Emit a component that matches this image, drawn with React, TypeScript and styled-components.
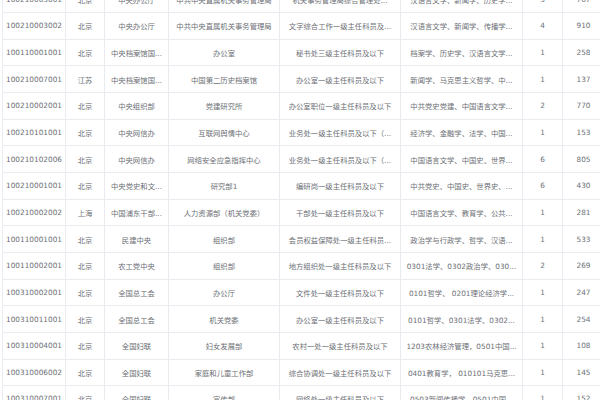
import styled, { createGlobalStyle } from "styled-components";

type Post = {
  code: string;
  area: string;
  dept: string;
  unit: string;
  post: string;
  major: string;
  count: string;
  applicants: string;
};

const posts: Array<Post> = [
  { code: "100210003001", area: "北京", dept: "中央办公厅", unit: "中共中央直属机关事务管理局", post: "机关事务管理局综合管理处...", major: "汉语言文学、新闻学、历史学...", count: "3", applicants: "767" },
  { code: "100210003002", area: "北京", dept: "中央办公厅", unit: "中共中央直属机关事务管理局", post: "文字综合工作一级主任科员及...", major: "汉语言文学、新闻学、传播学...", count: "4", applicants: "910" },
  { code: "100110001001", area: "北京", dept: "中央档案馆国...", unit: "办公室", post: "秘书处三级主任科员及以下", major: "档案学、历史学、汉语言文学...", count: "1", applicants: "258" },
  { code: "100210007001", area: "江苏", dept: "中央档案馆国...", unit: "中国第二历史档案馆", post: "办公室一级主任科员及以下", major: "新闻学、马克思主义哲学、中...", count: "1", applicants: "137" },
  { code: "100210002001", area: "北京", dept: "中央组织部", unit: "党建研究所", post: "办公室职位一级主任科员及以下", major: "中共党史党建、中国语言文学...", count: "2", applicants: "770" },
  { code: "100210101001", area: "北京", dept: "中央网信办", unit: "互联网舆情中心", post: "业务处一级主任科员及以下（...", major: "经济学、金融学、法学、中国...", count: "1", applicants: "153" },
  { code: "100210102006", area: "北京", dept: "中央网信办", unit: "网络安全应急指挥中心", post: "业务处一级主任科员及以下（...", major: "中国语言文学、中国史、世界...", count: "6", applicants: "805" },
  { code: "100210001001", area: "北京", dept: "中央党史和文...", unit: "研究部1", post: "编研岗一级主任科员及以下", major: "中共党史、中国史、世界史、...", count: "6", applicants: "430" },
  { code: "100210002002", area: "上海", dept: "中国浦东干部...", unit: "人力资源部（机关党委）", post: "干部处一级主任科员及以下", major: "中国语言文学、教育学、公共...", count: "1", applicants: "281" },
  { code: "100110001001", area: "北京", dept: "民建中央", unit: "组织部", post: "会员权益保障处一级主任科员...", major: "政治学与行政学、哲学、汉语...", count: "1", applicants: "533" },
  { code: "100110002001", area: "北京", dept: "农工党中央", unit: "组织部", post: "地方组织处一级主任科员及以下", major: "0301法学、0302政治学、030...", count: "2", applicants: "269" },
  { code: "100310002001", area: "北京", dept: "全国总工会", unit: "办公厅", post: "文件处一级主任科员及以下", major: "0101哲学、 0201理论经济学...", count: "1", applicants: "247" },
  { code: "100310011001", area: "北京", dept: "全国总工会", unit: "机关党委", post: "办公室一级主任科员及以下", major: "0101哲学、0301法学、0302...", count: "1", applicants: "254" },
  { code: "100310004001", area: "北京", dept: "全国妇联", unit: "妇女发展部", post: "农村一处一级主任科员及以下", major: "1203农林经济管理，0501中国...", count: "1", applicants: "108" },
  { code: "100310006002", area: "北京", dept: "全国妇联", unit: "家庭和儿童工作部", post: "综合协调处一级主任科员及以下", major: "0401教育学， 010101马克思...", count: "1", applicants: "145" },
  { code: "100310007001", area: "北京", dept: "全国妇联", unit: "宣传部", post: "网络处一级主任科员及以下", major: "0503新闻传播学，0501中国...", count: "1", applicants: "152" },
];

const App = () => {
  return (
    <>
      <GlobalStyle />
      <Viewport>
        <Table>
          {posts.map((item, index) => {
            return (
              <Row key={index}>
                <Cell>{item.code}</Cell>
                <Cell>{item.area}</Cell>
                <Cell>{item.dept}</Cell>
                <Cell>{item.unit}</Cell>
                <Cell>{item.post}</Cell>
                <Cell>{item.major}</Cell>
                <Cell>{item.count}</Cell>
                <Cell>{item.applicants}</Cell>
              </Row>
            );
          })}
        </Table>
      </Viewport>
    </>
  );
};

const GlobalStyle = createGlobalStyle`
  body {
    margin: 0;
    background: #ffffff;
    font-family: "DejaVu Sans", "Noto Sans CJK SC", sans-serif;
  }
`;

// the list is scrolled a little, so the first and last rows are cut
const Viewport = styled.div`
  width: 600px;
  height: 400px;
  overflow: hidden;
  padding-left: 2px;
  box-sizing: border-box;
`;

const Table = styled.div`
  width: 602px;
  margin-top: -13.7px;
  border-left: 1px solid #e9ebf0;
`;

const Row = styled.div`
  display: grid;
  grid-template-columns: 63px 39px 64px 111px 121px 122px 40px 42px;
  height: 26.67px;
  box-sizing: border-box;
  border-bottom: 1px solid #e9ebf0;
`;

const Cell = styled.div`
  display: flex;
  align-items: center;
  justify-content: center;
  padding: 0 4px;
  border-right: 1px solid #e9ebf0;
  color: #6c6f75;
  font-size: 7.33px;
  white-space: nowrap;
  overflow: hidden;
`;

export default App;
